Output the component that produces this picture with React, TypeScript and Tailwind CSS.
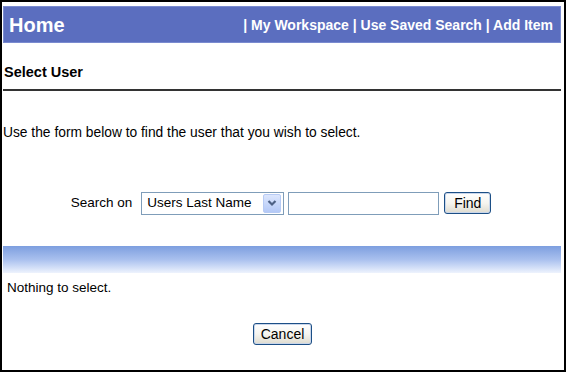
import React from "react";

function XpButton({ label, w }: { label: string; w: string }) {
  return (
    <button
      className={`${w} h-[22px] rounded-[3px] border border-[#1c4f86] bg-gradient-to-b from-[#ffffff] via-[#f6f5f0] to-[#dedbcf] text-[14px] leading-[16px] text-black flex items-center justify-center shadow-[inset_0_0_0_1px_#c9d6ea]`}
    >
      {label}
    </button>
  );
}

export default function App() {
  return (
    <div
      className="w-[566px] h-[372px] border-2 border-black bg-white flex flex-col"
      style={{ fontFamily: '"Liberation Sans", Arial, sans-serif' }}
    >
      <div className="mt-[4px] ml-[1px] mr-[3px] h-[37px] bg-[#5b6ebf] border border-[#7a8bd0] flex items-center justify-between pl-[5px] pr-[7px]">
        <span className="text-white font-bold text-[20px] leading-[24px]">Home</span>
        <span className="text-white font-bold text-[14px] leading-[18px] whitespace-pre">
          | My Workspace | Use Saved Search | Add Item
        </span>
      </div>

      <div className="mt-[20px] pl-[2px] font-bold text-[14.5px] leading-[18px] text-black">Select User</div>
      <div className="mt-[8px] ml-[1px] mr-[3px] h-[2px] bg-[#333333]" />

      <div className="mt-[34px] pl-[1px] text-[13.8px] leading-[16px] text-black">
        Use the form below to find the user that you wish to select.
      </div>

      <div className="mt-[50px] flex items-center justify-center h-[24px] pr-[4px]">
        <span className="text-[13.5px] leading-[16px] text-black mr-[9px]">Search on</span>
        <div className="w-[143px] h-[23px] border border-[#7f9db9] bg-white flex items-center justify-between pl-[5px] pr-[2px]">
          <span className="text-[13.5px] leading-[16px] text-black">Users Last Name</span>
          <div className="w-[18px] h-[19px] rounded-[2px] border border-[#b7cbf5] bg-gradient-to-b from-[#dce6fd] to-[#b4c9f7] flex items-center justify-center">
            <svg width="10" height="8" viewBox="0 0 10 8">
              <path d="M1.5 2 L5 5.5 L8.5 2" fill="none" stroke="#4d6185" strokeWidth="2.2" />
            </svg>
          </div>
        </div>
        <div className="ml-[4px] w-[151px] h-[23px] border border-[#7f9db9] bg-white" />
        <div className="ml-[5px]">
          <XpButton label="Find" w="w-[47px]" />
        </div>
      </div>

      <div className="mt-[31px] ml-[1px] mr-[3px] h-[27px] bg-gradient-to-b from-[#7d9edf] via-[#a9c0ee] to-[#eef3fd]" />

      <div className="mt-[7px] pl-[5px] text-[13.5px] leading-[16px] text-black">Nothing to select.</div>

      <div className="mt-[27px] flex justify-center pr-[1px]">
        <XpButton label="Cancel" w="w-[59px]" />
      </div>
    </div>
  );
}
